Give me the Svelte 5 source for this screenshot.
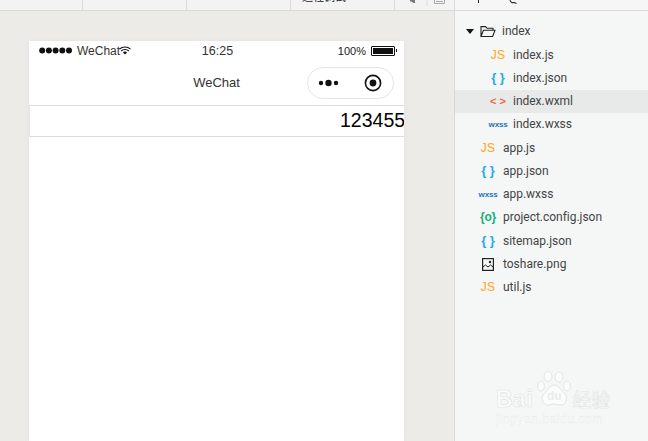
<script>
  const files = [
    { name: 'index.js', icon: 'js', nested: true },
    { name: 'index.json', icon: 'json', nested: true },
    { name: 'index.wxml', icon: 'wxml', nested: true, active: true },
    { name: 'index.wxss', icon: 'wxss', nested: true },
    { name: 'app.js', icon: 'js' },
    { name: 'app.json', icon: 'json' },
    { name: 'app.wxss', icon: 'wxss' },
    { name: 'project.config.json', icon: 'cfg' },
    { name: 'sitemap.json', icon: 'json' },
    { name: 'toshare.png', icon: 'img' },
    { name: 'util.js', icon: 'js' }
  ];
  const tabs = [83, 104, 104];
</script>

<div class="app">
  <header class="toolbar">
    <div class="tools">
      {#each tabs as w}
        <div class="tool" style="width: {w}px"></div>
      {/each}
      <div class="tool tool-label"><span class="clipped">远程调试</span></div>
      <div class="tool-icons">
        <svg viewBox="0 0 60 10" width="60" height="10">
          <path d="M15 0h5v3h-1.500l-2-1.500H15z" fill="#777"/>
          <path d="M32 0v6" stroke="#ddd" fill="none"/>
          <path d="M39.500 0v3.500h10V0M41 1.500h7" stroke="#aaa" fill="none"/>
        </svg>
      </div>
    </div>
    <div class="side-tools">
      <svg viewBox="0 0 70 10" width="70" height="10">
        <path d="M23.500 0v3" stroke="#222" fill="none"/>
        <path d="M55 0a3 3 0 0 0 4 2.500l2.500 1" stroke="#333" stroke-width="1.200" fill="none"/>
      </svg>
    </div>
  </header>

  <main class="body">
    <section class="stage">
      <div class="phone">
        <div class="status">
          <div class="status-left">
            <svg class="dots" viewBox="0 0 34 7" width="34" height="7">
              <circle cx="3.200" cy="3.500" r="3"/>
              <circle cx="9.900" cy="3.500" r="3"/>
              <circle cx="16.600" cy="3.500" r="3"/>
              <circle cx="23.300" cy="3.500" r="3"/>
              <circle cx="30" cy="3.500" r="3"/>
            </svg>
            <span class="carrier">WeChat</span>
            <svg class="wifi" viewBox="0 0 12 9" width="12" height="9">
              <path d="M.5 3.200a8 8 0 0 1 11 0M2.200 5a5.500 5.500 0 0 1 7.600 0" fill="none" stroke="#111" stroke-width="1.100"/>
              <path d="M6 8.600 3.900 6.600a3 3 0 0 1 4.200 0z" fill="#111"/>
            </svg>
          </div>
          <span class="clock">16:25</span>
          <div class="status-right">
            <span class="pct">100%</span>
            <span class="battery"><span class="level"></span></span>
            <span class="nub"></span>
          </div>
        </div>
        <div class="nav">
          <span class="title">WeChat</span>
          <div class="capsule">
            <svg viewBox="0 0 22 8" width="22" height="8">
              <circle cx="3" cy="4" r="2.200" fill="#111"/>
              <circle cx="10.500" cy="4" r="3.200" fill="#111"/>
              <circle cx="18" cy="4" r="2.200" fill="#111"/>
            </svg>
            <svg viewBox="0 0 18 18" width="18" height="18">
              <circle cx="9" cy="9" r="7.600" fill="none" stroke="#111" stroke-width="1.600"/>
              <circle cx="9" cy="9" r="3.400" fill="#111"/>
            </svg>
          </div>
        </div>
        <div class="row">123455</div>
      </div>
    </section>

    <aside class="tree">
      <div class="folder">
        <span class="caret"></span>
        <svg viewBox="0 0 16 13" width="16" height="13">
          <path d="M1 11.500V1.600h4.600l1.400 1.700h6v2M1 11.500h11.600l2.400-6.200H3.400L1 11.500z" fill="none" stroke="#222" stroke-width="1.100"/>
        </svg>
        <span>index</span>
      </div>
      {#each files as f}
        <div class="file" class:nested={f.nested} class:active={f.active}>
          <span class="ico">
            {#if f.icon === 'js'}
              <span class="i-js">JS</span>
            {:else if f.icon === 'json'}
              <span class="i-json">{'{ }'}</span>
            {:else if f.icon === 'wxml'}
              <span class="i-wxml">&lt; &gt;</span>
            {:else if f.icon === 'wxss'}
              <span class="i-wxss">wxss</span>
            {:else if f.icon === 'cfg'}
              <span class="i-cfg">{'{o}'}</span>
            {:else}
              <svg viewBox="0 0 12 13" width="12" height="13">
                <rect x=".6" y=".6" width="10.800" height="11.800" fill="none" stroke="#222" stroke-width="1.200"/>
                <path d="M1 9l2.500-2 2.500 2 2.500-2 2.500 2" fill="none" stroke="#222"/>
                <circle cx="8" cy="4" r="1.200" fill="#222"/>
              </svg>
            {/if}
          </span>
          <span class="fname">{f.name}</span>
        </div>
      {/each}
      <div class="mark" aria-hidden="true">
        <div class="mark-top">
          <span class="mark-latin">Bai</span>
          <span class="paw">
            <svg viewBox="0 0 36 40" width="36" height="40">
              <g fill="#fbfcfc" stroke="#e2e4e4" stroke-width="1">
                <ellipse cx="5" cy="15" rx="3.400" ry="5"/>
                <ellipse cx="12" cy="5.500" rx="4" ry="5"/>
                <ellipse cx="23" cy="6" rx="4" ry="5"/>
                <ellipse cx="31" cy="15" rx="3.400" ry="5"/>
                <path d="M18 14c-5 0-6 6-10 9-4 4-1 11 4 11 3 0 4-1 6-1s4 1 7 1c5 0 7-7 4-11-4-3-6-9-11-9z"/>
              </g>
            </svg>
            <span class="paw-du">du</span>
          </span>
          <span class="mark-cjk">经验</span>
        </div>
        <div class="mark-url">jingyan.baidu.com</div>
      </div>
    </aside>
  </main>
</div>

<style>
  :global(body) { margin: 0; overflow: hidden; }
  .app {
    width: 648px; height: 441px; overflow: hidden;
    display: flex; flex-direction: column;
    font-family: Roboto, "Liberation Sans", sans-serif;
    background: #ecebe8;
  }
  .toolbar {
    height: 10px; flex: none; display: flex; overflow: hidden;
    background: #f3f3f4; border-bottom: 1px solid #d9d9d9;
  }
  .tools { display: flex; width: 454px; flex: none; border-right: 1px solid #d9d9d9; box-sizing: content-box; }
  .tool { border-right: 1px solid #d9d9d9; height: 10px; flex: none; box-sizing: border-box; overflow: hidden; }
  .tool-label { width: 104px; display: flex; align-items: flex-end; padding-left: 11px; }
  .clipped {
    font-family: "Noto Sans CJK SC", sans-serif; font-size: 11px; line-height: 11px; color: #222;
    transform: translateY(-8px); white-space: nowrap;
  }
  .tool-icons { flex: 1; height: 10px; }
  .side-tools { flex: 1; background: #f6f6f6; height: 10px; }
  .toolbar svg { display: block; }
  .body { flex: 1; display: flex; min-height: 0; }
  .stage { width: 454px; flex: none; padding: 30px 0 0 29px; box-sizing: border-box; }
  .phone {
    width: 375px; height: 400px; background: #fff; display: flex; flex-direction: column;
    box-shadow: 0 0 6px rgba(0, 0, 0, 0.04);
  }
  .status {
    height: 20px; box-sizing: border-box; padding: 0 7px 1px 10px;
    display: grid; grid-template-columns: 1fr auto 1fr; align-items: center;
    font-family: "Liberation Sans", sans-serif; font-size: 12px; color: #222;
  }
  .status-left { display: flex; align-items: center; }
  .dots { fill: #111; flex: none; }
  .carrier { margin-left: 4px; color: #333; }
  .wifi { margin-left: -1px; }
  .clock { color: #333; font-size: 12.5px; margin-right: 1px; }
  .status-right { display: flex; align-items: center; justify-content: flex-end; font-size: 11px; }
  .battery {
    width: 20px; height: 6px; border: 1px solid #111; padding: 1px; margin-left: 5px;
    display: block; border-radius: 1px; flex: none;
  }
  .level { display: block; width: 100%; height: 6px; background: #111; }
  .nub { width: 1px; height: 3px; background: #111; margin-left: 1px; }
  .nav {
    height: 44px; flex: none; position: relative; display: flex; align-items: center; justify-content: center;
    font-family: "Liberation Sans", sans-serif; font-size: 13px; color: #333;
    border-bottom: 1px solid #dcdcdc; box-sizing: content-box;
  }
  .title { margin-bottom: 2px; }
  .capsule {
    position: absolute; right: 10px; top: 6px; width: 87px; height: 32px; box-sizing: border-box;
    border: 1px solid #e6e6e6; border-radius: 16px;
    display: flex; align-items: center; justify-content: space-between; padding: 0 11px 0 10px;
  }
  .row {
    height: 30px; border-bottom: 1px solid #dcdcdc; border-left: 1px solid #e4e4e4;
    font-family: "Liberation Sans", sans-serif; font-size: 19.5px;
    line-height: 29px; color: #000; padding-left: 310px; white-space: nowrap; overflow: hidden;
  }
  .tree {
    flex: 1; background: #f5f7f7; border-left: 1px solid #d9d9d9; padding-top: 8px;
    font-size: 12px; color: #444; position: relative; letter-spacing: -0.02px;
  }
  .folder { height: 24px; display: flex; align-items: center; padding-left: 11px; gap: 6px; }
  .caret {
    width: 0; height: 0; border-left: 4px solid transparent; border-right: 4px solid transparent;
    border-top: 5px solid #111;
  }
  .file { height: 23.27px; display: flex; align-items: center; padding-left: 22px; }
  .file.nested { padding-left: 32px; }
  .file.active { background: #e8e9e9; }
  .ico {
    width: 22px; margin-right: 4px; flex: none; display: flex; justify-content: center; align-items: center;
    font-family: "Liberation Sans", sans-serif; font-weight: 700;
  }
  .i-js { font-size: 12px; color: #fdae2d; font-weight: 400; letter-spacing: 0.2px; -webkit-text-stroke: 0.15px #fdae2d; }
  .i-json { font-size: 13px; color: #1fa8ea; }
  .i-wxml { font-size: 11px; color: #f0693a; }
  .i-wxss { font-size: 8px; color: #1f74b8; letter-spacing: -0.2px; }
  .i-cfg { font-size: 12px; color: #17ad7e; letter-spacing: -0.3px; }
  .mark {
    position: absolute; left: 41px; top: 360px; width: 122px; text-align: left;
    font-family: "Liberation Sans", sans-serif;
  }
  .mark-top { display: flex; align-items: flex-end; height: 40px; }
  .mark-latin {
    font-size: 23px; line-height: 24px; font-weight: 700; color: #fbfcfc; -webkit-text-stroke: 0.7px #e2e4e4;
    letter-spacing: 0.5px; flex: none;
  }
  .paw { position: relative; width: 36px; height: 40px; flex: none; margin-left: 3px; }
  .paw svg { display: block; }
  .paw-du {
    position: absolute; left: 0; right: 0; top: 18px; text-align: center; font-size: 12px; font-weight: 700;
    color: #e9ebeb;
  }
  .mark-cjk {
    font-family: "Noto Sans CJK SC", sans-serif; font-size: 19px; line-height: 24px; color: #fbfcfc;
    -webkit-text-stroke: 0.6px #e2e4e4; flex: none;
  }
  .mark-url { font-size: 12px; line-height: 14px; margin-top: 1px; letter-spacing: 0.6px; color: #fbfcfc; -webkit-text-stroke: 0.3px #e5e7e7; white-space: nowrap; }
</style>
